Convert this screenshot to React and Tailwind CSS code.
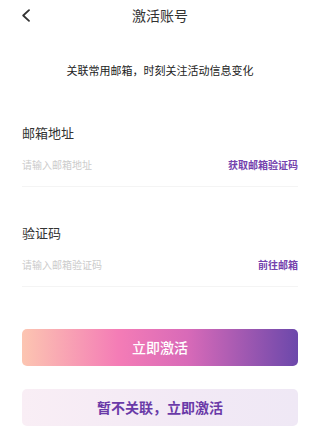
import React from "react";

const font = { fontFamily: '"Noto Sans CJK SC", "Noto Sans", sans-serif' };

function Field({ label, placeholder, action }) {
  return (
    <div>
      <div className="text-[13px] leading-[18px] text-[#333333]">{label}</div>
      <div className="mt-[16px] flex items-center justify-between">
        <span className="text-[10px] leading-[14px] text-[#cbcbcb]">{placeholder}</span>
        <span className="text-[10px] leading-[14px] font-semibold text-[#7442ad]">{action}</span>
      </div>
      <div className="mt-[14px] h-px bg-[#f4f4f4]" />
    </div>
  );
}

export default function App() {
  return (
    <div className="w-[320px] h-[428px] bg-white overflow-hidden" style={font}>
      {/* header */}
      <div className="relative h-[30px] flex items-center justify-center">
        <svg
          className="absolute left-[21px] top-[9px]"
          width="10"
          height="13"
          viewBox="0 0 10 13"
          fill="none"
        >
          <path d="M8 1.2 L2.2 6.5 L8 11.8" stroke="#333333" strokeWidth="1.8" strokeLinecap="round" strokeLinejoin="round" />
        </svg>
        <span className="text-[14px] leading-[20px] text-[#333333]">激活账号</span>
      </div>

      <p className="mt-[32px] text-center text-[11px] leading-[16px] text-[#222222]">
        关联常用邮箱，时刻关注活动信息变化
      </p>

      <div className="px-[22px]">
        <div className="mt-[46px]">
          <Field label="邮箱地址" placeholder="请输入邮箱地址" action="获取邮箱验证码" />
        </div>
        <div className="mt-[37px]">
          <Field label="验证码" placeholder="请输入邮箱验证码" action="前往邮箱" />
        </div>

        <button className="mt-[42px] w-full h-[37px] rounded-[5px] bg-[linear-gradient(90deg,#fcc5b1_0%,#f47cb6_35%,#d86ab8_60%,#6c48ab_100%)] text-white text-[14px] font-medium flex items-center justify-center">
          立即激活
        </button>
        <button className="mt-[23px] w-full h-[37px] rounded-[5px] bg-[linear-gradient(90deg,#f9eef5_0%,#f2e9f5_60%,#efe8f5_100%)] text-[#6a3aa8] text-[14px] font-semibold flex items-center justify-center">
          暂不关联，立即激活
        </button>
      </div>
    </div>
  );
}
